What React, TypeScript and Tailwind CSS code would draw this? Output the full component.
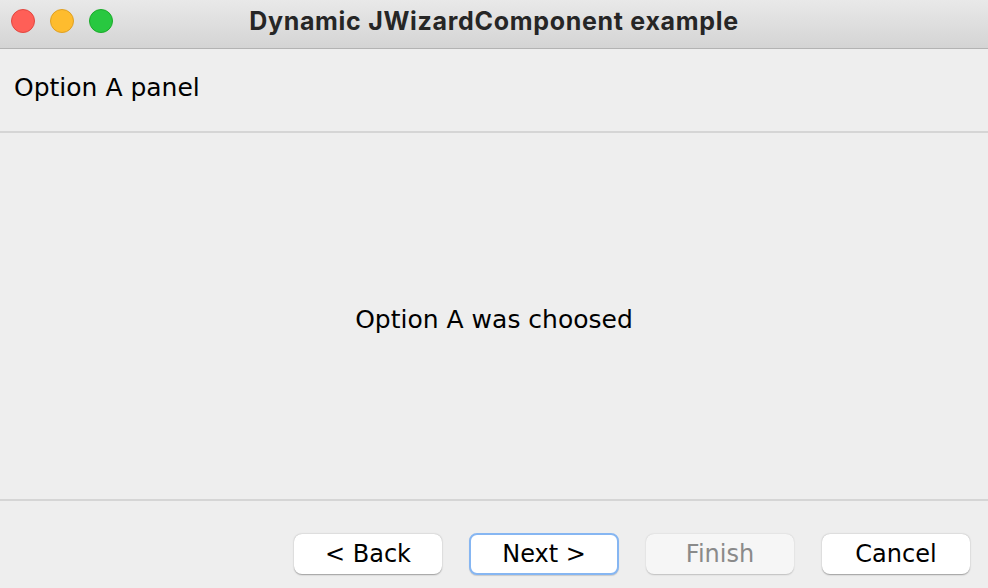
import React from "react";

function Btn({ label, variant, className = "" }: { label: string; variant?: "focus" | "disabled"; className?: string }) {
  const base =
    "w-[148px] h-[40px] rounded-[8px] flex items-center justify-center text-[24px] leading-none " + className;
  if (variant === "focus")
    return (
      <div className={base + " bg-white border-2 border-[#86b6f2] text-black shadow-[0_1px_1px_rgba(0,0,0,0.15)] w-[150px] h-[42px] -my-px"}>
        {label}
      </div>
    );
  if (variant === "disabled")
    return (
      <div className={base + " bg-[#f6f6f6] text-[#8a8a8a] shadow-[0_0.5px_1.5px_rgba(0,0,0,0.2)]"}>
        {label}
      </div>
    );
  return (
    <div className={base + " bg-white text-black shadow-[0_0.5px_1.5px_rgba(0,0,0,0.35)]"}>
      {label}
    </div>
  );
}

export default function App() {
  return (
    <div
      className="w-[988px] h-[588px] flex flex-col bg-[#eeeeee] overflow-hidden"
      style={{ fontFamily: '"DejaVu Sans", sans-serif' }}
    >
      {/* Title bar */}
      <div className="relative h-[49px] shrink-0 bg-gradient-to-b from-[#e9e9e9] to-[#d4d4d4] border-b border-[#b3b3b3] flex items-center justify-center">
        <div className="absolute left-[11px] top-[9px] flex gap-[15px]">
          <div className="w-[24px] h-[24px] rounded-full bg-[#ff5f57] border border-[#e2463f]" />
          <div className="w-[24px] h-[24px] rounded-full bg-[#febc2e] border border-[#dfa023]" />
          <div className="w-[24px] h-[24px] rounded-full bg-[#28c840] border border-[#1aab29]" />
        </div>
        <div
          className="text-[25px] font-bold text-[#262626] -mt-[5px] tracking-[0.7px]"
          style={{ fontFamily: "Inter, sans-serif" }}
        >
          Dynamic JWizardComponent example
        </div>
      </div>

      {/* Header */}
      <div className="h-[84px] shrink-0 flex items-center pl-[14px] text-[25px] text-black border-b-2 border-[#d5d5d5]">
        <span className="-mt-[4px]">Option A panel</span>
      </div>

      {/* Content */}
      <div className="flex-1 flex items-center justify-center text-[25px] text-black">
        <span className="mt-[8px]">Option A was choosed</span>
      </div>

      {/* Footer */}
      <div className="h-[89px] shrink-0 border-t-2 border-[#d5d5d5] flex items-start justify-end pt-[33px] pr-[18px] gap-[27px]">
        <Btn label="< Back" />
        <Btn label="Next >" variant="focus" />
        <Btn label="Finish" variant="disabled" />
        <Btn label="Cancel" className="ml-px" />
      </div>
    </div>
  );
}
